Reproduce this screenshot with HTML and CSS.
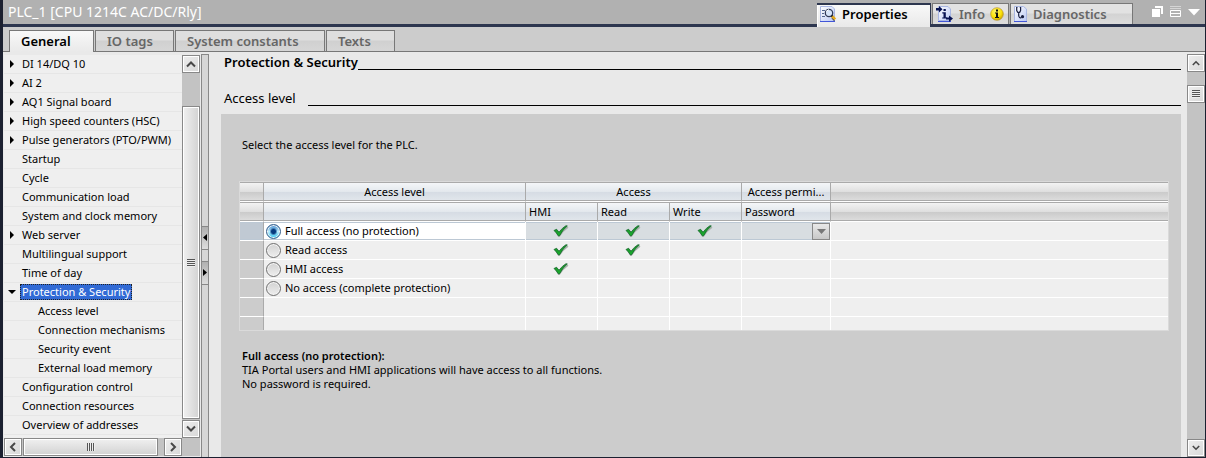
FILE: index.html
```html
<!DOCTYPE html>
<html lang="en">
<head>
<meta charset="utf-8">
<title>PLC_1 properties</title>
<link rel="stylesheet" href="styles.css">
</head>
<body>
<svg class="defs" width="0" height="0" aria-hidden="true">
  <defs>
    <linearGradient id="page" x1="0" y1="0" x2="1" y2="1"><stop offset="0" stop-color="#fff"/><stop offset="1" stop-color="#b9c8f5"/></linearGradient>
    <linearGradient id="green" x1="0" y1="0" x2="0" y2="1"><stop offset="0" stop-color="#1f8a2c"/><stop offset="1" stop-color="#18b02c"/></linearGradient>
    <radialGradient id="ball" cx=".4" cy=".3" r=".75"><stop offset="0" stop-color="#fff56a"/><stop offset=".6" stop-color="#fbe208"/><stop offset="1" stop-color="#c79c00"/></radialGradient>
    <symbol id="check" viewBox="0 0 16 12">
      <path d="M2.5 6.2 6 11.6Q9.500 6 15 2.200" fill="none" stroke="#a9b3ab" stroke-width="1.500"/>
      <path d="M1 5.500 3.600 4.300 6 7.200Q9.300 2.800 13 .7L14.300 1Q9.500 4.800 6.600 10.700L5.300 10.800Q3.400 7.500 1 5.500Z" fill="url(#green)" stroke="#12662a" stroke-width=".8"/>
    </symbol>
    <symbol id="up" viewBox="0 0 10 8"><path d="M1 6.500 5 2.500 9 6.500" fill="none" stroke="#484848" stroke-width="2"/></symbol>
    <symbol id="down" viewBox="0 0 10 8"><path d="M1 1.500 5 5.500 9 1.500" fill="none" stroke="#484848" stroke-width="2"/></symbol>
    <symbol id="left" viewBox="0 0 8 10"><path d="M6 1 2 5 6 9" fill="none" stroke="#484848" stroke-width="2"/></symbol>
    <symbol id="right" viewBox="0 0 8 10"><path d="M2 1 6 5 2 9" fill="none" stroke="#484848" stroke-width="2"/></symbol>
  </defs>
</svg>
<div class="window">
  <header class="titlebar">
    <h1 class="title">PLC_1 [CPU 1214C AC/DC/Rly]</h1>
    <div class="views" role="tablist" aria-label="Inspector views">
      <button class="view view-properties active" role="tab" aria-selected="true">
        <svg width="17" height="16" viewBox="0 0 17 16" aria-hidden="true"><path d="M.5.500H12L14.500 3V15.500H.500Z" fill="url(#page)" stroke="#a9b7e3"/><path d="M0 15.500H15" stroke="#4256d8"/><path d="M2 4.500H5M2 7.500H4M2 10.500H5" stroke="#52658e"/><circle cx="9" cy="7" r="3.700" fill="#d7e5fa" stroke="#323c58" stroke-width="1.300"/><path d="M6 5.500 9 3.500" stroke="#fff"/><path d="M11.500 9.500 12.700 10.700" stroke="#222" stroke-width="2"/><path d="M12.300 10.500 15 13.500" stroke="#e5a91c" stroke-width="3"/><path d="M12 12.300 14.500 15" stroke="#2d3556"/></svg>
        <span>Properties</span>
      </button>
      <button class="view view-info" role="tab" aria-selected="false">
        <svg width="18" height="16" viewBox="0 0 18 16" aria-hidden="true"><path d="M2.500.500H12L14.500 3V14.500H2.500Z" fill="url(#page)" stroke="#a9b7e3"/><path d="M2 15.500H15" stroke="#4256d8"/><g fill="#071252"><path d="M0 2H3V0L6.500 3.200 3 6.500V4.500H0ZM10 11.500H13V9.500L17 12.500 13 16V13.500H10Z"/><path d="M7.500 3H9.800V5H7.500ZM6.300 6.300H9.800V11.400H11V12.500H6.200V11.400H7.500V7.400H6.300Z"/></g></svg>
        <span>Info</span>
        <svg class="badge" width="14" height="14" viewBox="0 0 14 14" aria-hidden="true"><circle cx="7" cy="7" r="6.300" fill="url(#ball)" stroke="#b7962b" stroke-width=".7"/><path d="M6 2.500H8V4.500H6ZM5 5.500H8V10H9V11H5V10H6V6.500H5Z" fill="#111"/></svg>
      </button>
      <button class="view view-diagnostics" role="tab" aria-selected="false">
        <svg width="14" height="16" viewBox="0 0 14 16" aria-hidden="true"><path d="M.5.500H9.500L12.500 3V15.500H.500Z" fill="url(#page)" stroke="#a9b7e3"/><path d="M0 15.500H13" stroke="#4256d8"/><path d="M3.500 1.500H2.700V4.500Q3.500 6.700 4.700 6.700 6 6.700 6.600 4.500V1.500H5.800M4.700 6.700V9.500Q5 12.200 7.200 11.800" fill="none" stroke="#171d3e" stroke-width="1.200"/><circle cx="8.500" cy="10.700" r="1.600" fill="#171d3e"/></svg>
        <span>Diagnostics</span>
      </button>
    </div>
    <div class="window-tools">
      <button aria-label="Float window"><svg width="11" height="11" viewBox="0 0 11 11"><path d="M3 0H11V8H9V2H3ZM0 3H8V11H0Z" fill="#fff"/></svg></button>
      <button aria-label="Dock window"><svg width="11" height="11" viewBox="0 0 11 11"><path d="M0 .5H11M0 2.500H11" stroke="#d5d5d5"/><path d="M.5 4.500H10.500V10.500H.500ZM0 7.500H11" fill="none" stroke="#fff"/></svg></button>
      <button aria-label="Collapse window"><svg width="12" height="11" viewBox="0 0 12 11"><path d="M0 3H12L6 9.500Z" fill="#fff"/></svg></button>
    </div>
  </header>

  <div class="tabs" role="tablist" aria-label="Property pages">
    <button class="tab tab-general active" role="tab" aria-selected="true">General</button>
    <button class="tab tab-io" role="tab" aria-selected="false">IO tags</button>
    <button class="tab tab-system" role="tab" aria-selected="false">System constants</button>
    <button class="tab tab-texts" role="tab" aria-selected="false">Texts</button>
  </div>

  <div class="body">
    <nav class="sidebar" aria-label="Property groups">
      <ul class="tree">
        <li class="closed"><a href="#">DI 14/DQ 10</a></li>
        <li class="closed"><a href="#">AI 2</a></li>
        <li class="closed"><a href="#">AQ1 Signal board</a></li>
        <li class="closed"><a href="#">High speed counters (HSC)</a></li>
        <li class="closed"><a href="#">Pulse generators (PTO/PWM)</a></li>
        <li><a href="#">Startup</a></li>
        <li><a href="#">Cycle</a></li>
        <li><a href="#">Communication load</a></li>
        <li><a href="#">System and clock memory</a></li>
        <li class="closed"><a href="#">Web server</a></li>
        <li><a href="#">Multilingual support</a></li>
        <li><a href="#">Time of day</a></li>
        <li class="open"><a class="selected" href="#" aria-current="true">Protection &amp; Security</a></li>
        <li class="sub"><a href="#">Access level</a></li>
        <li class="sub"><a href="#">Connection mechanisms</a></li>
        <li class="sub"><a href="#">Security event</a></li>
        <li class="sub"><a href="#">External load memory</a></li>
        <li><a href="#">Configuration control</a></li>
        <li><a href="#">Connection resources</a></li>
        <li><a href="#">Overview of addresses</a></li>
      </ul>
      <div class="scroll vertical tree-scroll">
        <button class="scroll-button" aria-label="Scroll up"><svg width="10" height="8"><use href="#up"/></svg></button>
        <div class="track"><div class="thumb"><i class="grip"></i></div></div>
        <button class="scroll-button" aria-label="Scroll down"><svg width="10" height="8"><use href="#down"/></svg></button>
      </div>
      <div class="scroll horizontal">
        <button class="scroll-button" aria-label="Scroll left"><svg width="8" height="10"><use href="#left"/></svg></button>
        <div class="track"><div class="thumb"><i class="grip"></i></div></div>
        <button class="scroll-button" aria-label="Scroll right"><svg width="8" height="10"><use href="#right"/></svg></button>
      </div>
      <div class="corner"></div>
    </nav>

    <div class="splitter">
      <button aria-label="Collapse left"><svg width="4" height="7" viewBox="0 0 4 7"><path d="M4 0V7L0 3.500Z"/></svg></button>
      <button aria-label="Collapse right"><svg width="4" height="7" viewBox="0 0 4 7"><path d="M0 0V7L4 3.500Z"/></svg></button>
    </div>

    <main class="content">
      <h2 class="heading">Protection &amp; Security</h2>
      <h3 class="subheading">Access level</h3>
      <section class="panel">
        <p class="prompt">Select the access level for the PLC.</p>
        <table class="grid">
          <colgroup><col class="c-gutter"><col class="c-level"><col class="c-flag"><col class="c-flag"><col class="c-flag"><col class="c-password"><col></colgroup>
          <thead>
            <tr><th class="plain"></th><th>Access level</th><th colspan="3">Access</th><th>Access permi...</th><th class="plain end"></th></tr>
            <tr class="names"><th class="plain"></th><th></th><th>HMI</th><th>Read</th><th>Write</th><th>Password</th><th class="plain end"></th></tr>
          </thead>
          <tbody>
            <tr class="current">
              <td class="gutter"></td>
              <td><label class="choice"><input type="radio" name="level" checked>Full access (no protection)</label></td>
              <td class="flag"><svg width="16" height="12" role="img" aria-label="Yes"><use href="#check"/></svg></td>
              <td class="flag"><svg width="16" height="12" role="img" aria-label="Yes"><use href="#check"/></svg></td>
              <td class="flag"><svg width="16" height="12" role="img" aria-label="Yes"><use href="#check"/></svg></td>
              <td><div class="picker"><select aria-label="Password"><option></option></select><span class="picker-button"><svg width="9" height="5" viewBox="0 0 9 5" aria-hidden="true"><path d="M0 0H9L4.500 5Z" fill="#777"/></svg></span></div></td>
              <td></td>
            </tr>
            <tr>
              <td class="gutter"></td>
              <td><label class="choice"><input type="radio" name="level">Read access</label></td>
              <td class="flag"><svg width="16" height="12" role="img" aria-label="Yes"><use href="#check"/></svg></td>
              <td class="flag"><svg width="16" height="12" role="img" aria-label="Yes"><use href="#check"/></svg></td>
              <td></td><td></td><td></td>
            </tr>
            <tr>
              <td class="gutter"></td>
              <td><label class="choice"><input type="radio" name="level">HMI access</label></td>
              <td class="flag"><svg width="16" height="12" role="img" aria-label="Yes"><use href="#check"/></svg></td>
              <td></td><td></td><td></td><td></td>
            </tr>
            <tr>
              <td class="gutter"></td>
              <td><label class="choice"><input type="radio" name="level">No access (complete protection)</label></td>
              <td></td><td></td><td></td><td></td><td></td>
            </tr>
            <tr><td class="gutter"></td><td></td><td></td><td></td><td></td><td></td><td></td></tr>
            <tr class="last"><td class="gutter"></td><td></td><td></td><td></td><td></td><td></td><td></td></tr>
          </tbody>
        </table>
        <div class="description">
          <strong>Full access (no protection):</strong>
          <p>TIA Portal users and HMI applications will have access to all functions.<br>No password is required.</p>
        </div>
      </section>
    </main>

    <div class="scroll vertical page-scroll">
      <button class="scroll-button" aria-label="Scroll up"><svg width="8" height="8"><use href="#up"/></svg></button>
      <div class="track"><div class="thumb"><i class="grip"></i></div></div>
      <button class="scroll-button" aria-label="Scroll down"><svg width="8" height="8"><use href="#down"/></svg></button>
    </div>
  </div>
</div>
</body>
</html>
```

FILE: styles.css
```css
* { box-sizing: border-box; }
body { margin: 0; font: 11px/14px "Noto Sans", "Open Sans", sans-serif; color: #000; }
button { font: inherit; color: inherit; margin: 0; padding: 0; border: 0; background: none; }
h1, h2, h3, p, ul { margin: 0; padding: 0; }
svg { display: block; flex: none; }
.defs { position: absolute; }

.window {
  display: flex; flex-direction: column; min-height: 100vh;
  border: solid #1b2030; border-width: 0 1px 1px 3px; background: #e9e9e9;
}

/* Title bar */
.titlebar { display: flex; height: 27px; border-bottom: 3px solid #2d364f; background: #b1b1b1; }
.title { flex: 1; padding-left: 5px; color: #fff; font-size: 14px; line-height: 24px; font-weight: 400; }
.views { display: flex; gap: 1px; padding-top: 3px; }
.view {
  display: flex; align-items: center; gap: 5px; height: 21px; padding-left: 3px;
  border: solid #777; border-width: 1px 1px 0; color: #666;
  background: linear-gradient(#e2e2e2 45%, #d3d3d3 50%, #dcdcdc);
  font-size: 13px; line-height: 18px; font-weight: 600;
}
.view.active {
  height: 24px; padding-bottom: 4px; color: #000; background: linear-gradient(#f8f8f8, #e9e9e9);
  border: solid #2d364f; border-width: 2px 1px 0 0; box-shadow: inset 1px 0 #fff;
}
.view-properties { width: 114px; }
.view-info { width: 77px; }
.view-diagnostics { width: 123px; }
.window-tools { display: flex; gap: 7px; padding: 6px 5px 0 19px; }
.window-tools button { height: 11px; }

/* Page tabs */
.tabs { display: flex; gap: 1px; height: 25px; padding: 3px 0 0 6px; background: #ccc; border-bottom: 1px solid #777; }
.tab {
  height: 21px; padding-left: 11px; text-align: left; border: solid #777; border-width: 1px 1px 0;
  color: #666; background: linear-gradient(#dedede 45%, #d0d0d0 50%, #d6d6d6);
  font-size: 13px; line-height: 20px; font-weight: 600;
}
.tab.active { height: 22px; padding-bottom: 2px; color: #000; background: linear-gradient(#f8f8f8, #e9e9e9); }
.tab-general { width: 85px; }
.tab-io { width: 79px; }
.tab-system { width: 150px; }
.tab-texts { width: 69px; }

.body { flex: 1; display: flex; padding-top: 2px; }

/* Navigation tree */
.sidebar { display: grid; grid-template: 1fr 18px / 178px 18px; width: 198px; padding: 1px 0 1px 1px; }
.tree { list-style: none; background: #efefef; padding-bottom: 3px; }
.tree li { display: flex; align-items: center; height: 19px; padding-left: 16px; border-bottom: 1px solid #e6e6e6; white-space: nowrap; }
.tree a { padding: 1px 2px; color: inherit; text-decoration: none; }
.tree .sub { padding-left: 32px; }
.tree .closed, .tree .open { padding-left: 4px; }
.closed::before, .open::before { content: ""; flex: none; background: #000; }
.closed::before { width: 4px; height: 8px; margin: 0 6px 0 2px; clip-path: polygon(0 0, 100% 50%, 0 100%); }
.open::before { width: 8px; height: 4px; margin-right: 4px; clip-path: polygon(0 0, 100% 0, 50% 100%); }
.tree .selected { padding: 0 1px; color: #fff; background: #316ad5; border: 1px dotted #222; line-height: 14px; }

/* Scroll bars */
.scroll { display: flex; background: #c3c3c3; }
.vertical { flex-direction: column; width: 18px; }
.horizontal { height: 18px; }
.scroll-button, .thumb {
  display: flex; align-items: center; justify-content: center;
  border: 1px solid #888; box-shadow: inset 0 0 0 1px #fff; background: linear-gradient(135deg, #eee, #d8d8d8);
}
.scroll-button { flex: none; width: 18px; height: 18px; }
.track { flex: 1; display: flex; }
.vertical .track { flex-direction: column; }
.thumb { flex: none; }
.grip { width: 8px; height: 8px; background: repeating-linear-gradient(#555 0 1px, #eee 1px 2px); }
.horizontal .grip { background: repeating-linear-gradient(90deg, #555 0 1px, #eee 1px 2px); }
.tree-scroll .track { padding: 33px 0 1px; }
.tree-scroll .thumb { flex: 1; background: linear-gradient(90deg, #f0f0f0, #d2d2d2); }
.horizontal .track { padding: 0 6px 0 1px; }
.horizontal .thumb { flex: 1; background: linear-gradient(#f0f0f0, #d2d2d2); }
.page-scroll .track { padding-top: 13px; }
.page-scroll .thumb { height: 18px; }
.corner { background: #c3c3c3; }

.splitter {
  display: flex; flex-direction: column; justify-content: center; gap: 11px; width: 8px; padding-bottom: 2px;
  border: solid #888; border-width: 1px 1px 0; background: #d6d6d6;
}
.splitter button {
  display: flex; align-items: center; justify-content: center; height: 24px;
  border: solid #888; border-width: 1px 0; background: linear-gradient(#b0b0b0, #ddd);
}

/* Settings */
.content { flex: 1; display: flex; flex-direction: column; padding: 0 6px 0 12px; }
.heading, .subheading { display: flex; padding-left: 3px; font-size: 13px; line-height: 16px; white-space: nowrap; }
.heading::after, .subheading::after { content: ""; flex: 1; height: 15px; border-bottom: 1px solid #000; }
.heading::after { height: 15px; }
.heading { font-weight: 600; }
.subheading { font-weight: 400; margin: 20px 0 8px; gap: 12px; }
.panel { flex: 1; padding: 24px 12px 0 18px; background: #ccc; }
.prompt { padding-left: 3px; margin-bottom: 29px; }

.grid { width: 100%; table-layout: fixed; border-collapse: separate; border-spacing: 0; border: 1px solid #dadada; }
.c-gutter { width: 24px; }
.c-level { width: 262px; }
.c-flag { width: 72px; }
.c-password { width: 89px; }
.grid th {
  height: 20px; padding: 0 3px; font-weight: 400; line-height: 16px; white-space: nowrap;
  border: solid #aaa; border-width: 1px 1px 1px 0; border-bottom-color: #fff;
  background: linear-gradient(#f4f6f8, #e3e8ed 48%, #d6dce4 52%, #e2e7ec); box-shadow: inset 0 -1px #aaa;
}
.grid .names th { text-align: left; }
.grid th.plain { background: linear-gradient(#f3f3f3, #dfdfdf 48%, #cbcbcb 52%, #dedede); }
.grid th.end { border-right: 0; }
.grid td { height: 19px; padding: 0; background: #efefef; border: solid #fff; border-width: 0 1px 1px 0; }
.grid td:last-child { border-right: 0; }
.grid td.gutter { background: #ccc; border-right-color: #aaa; }
.grid .last td { height: 13px; border-bottom: 0; }
.grid .current td { background: #d8dde1; box-shadow: inset 0 1px #bcc8d4, inset 0 -1px #bcc8d4; }
.grid .current td:nth-child(2) { background: #fff; }
.grid .current td:last-child { background: #efefef; box-shadow: none; }
.grid .current td.gutter { background: #c0c9d3; }
.grid td.flag { padding-right: 2px; }
.flag svg { margin: 0 auto; }
.choice { display: flex; align-items: center; gap: 4px; height: 17px; padding-left: 2px; }
.choice input {
  appearance: none; width: 15px; height: 15px; margin: 0; border: 1px solid #707070; border-radius: 50%;
  background: linear-gradient(#d2d2d2, #eee); box-shadow: inset 0 0 0 1px #f4f4f4;
}
.choice input:checked { border-color: #345f8d; background: radial-gradient(circle, #063a7e 0 2px, #fff0 4px), linear-gradient(#3c83cb, #b8edff 50%, #32c3ed); }
.picker { display: grid; height: 17px; }
.picker select { grid-area: 1 / 1; appearance: none; width: 100%; border: 0; background: none; }
.picker-button {
  grid-area: 1 / 1; justify-self: end; display: flex; align-items: center; justify-content: center;
  width: 18px; border: 1px solid #888; background: linear-gradient(#e8e8e8, #c8c8c8); pointer-events: none;
}
.description { padding: 17px 3px; }
.description strong { display: block; font-weight: 600; line-height: 15px; }
```
